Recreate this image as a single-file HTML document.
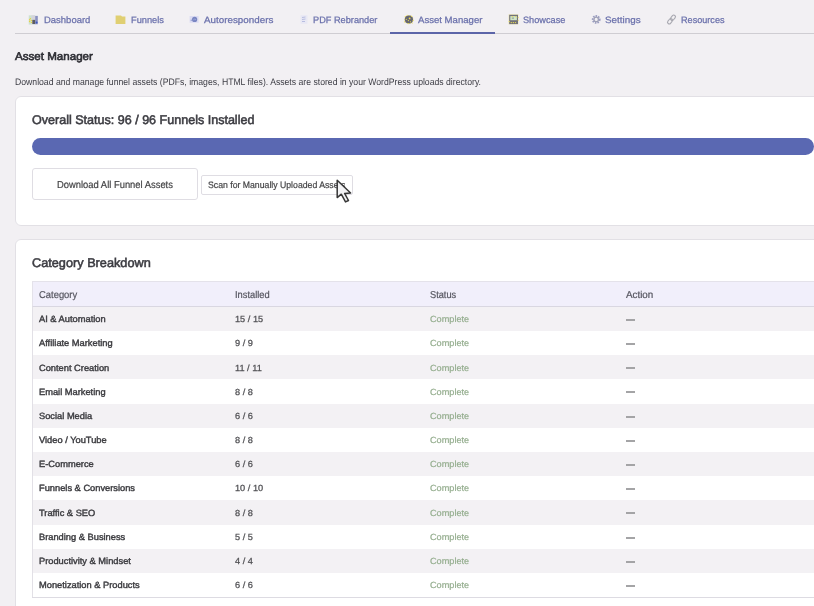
<!DOCTYPE html>
<html><head><meta charset="utf-8">
<style>
html,body{margin:0;padding:0;}
body{width:814px;height:606px;overflow:hidden;position:relative;background:#f2f0f3;font-family:"Liberation Sans",sans-serif;}
.a{position:absolute;white-space:nowrap;line-height:1;transform-origin:0 0;text-rendering:geometricPrecision;}
body>*{filter:blur(0.3px);}
</style></head><body>
<div class="a" style="left:15px;top:32.5px;width:800px;height:1px;background:#cfcdd2"></div>
<div class="a" style="left:389.8px;top:32px;width:104.8px;height:2px;background:#5c65a8"></div>
<svg class="a" style="left:0;top:0" width="814" height="30" viewBox="0 0 814 30">
<!-- dashboard -->
<rect x="28.8" y="15" width="9" height="9.5" fill="#e4e8ec"/>
<rect x="28.8" y="15.5" width="3" height="9" fill="#cde2cd"/>
<rect x="31.5" y="15.2" width="3.6" height="4.2" fill="#d4d4da"/>
<circle cx="30.4" cy="18.6" r="0.7" fill="#e8d040"/><circle cx="29.6" cy="19.7" r="0.7" fill="#e8d040"/><circle cx="31.4" cy="20.4" r="0.7" fill="#e8d040"/><circle cx="29.6" cy="21.5" r="0.7" fill="#e8d040"/><circle cx="31.4" cy="22.4" r="0.7" fill="#e8d040"/>
<rect x="32.3" y="19.8" width="3.2" height="4.3" fill="#5c5c60"/>
<rect x="35.2" y="16" width="2.6" height="8.2" fill="#8a90c0"/>
<circle cx="36.6" cy="22.6" r="1" fill="#3a55c0"/>
<!-- folder -->
<path d="M115.6 15.4 H121 L122 16.5 H125.4 V24 H115.6 Z" fill="#e0cf72"/>
<!-- autoresponders -->
<rect x="189.6" y="16" width="9" height="6.8" fill="#dcdcf2"/>
<circle cx="194.6" cy="19.4" r="2.6" fill="#7a86c2"/>
<path d="M193.3 19.8 Q194.6 18.6 196 19.6" stroke="#aab2dc" stroke-width="0.7" fill="none"/>
<circle cx="191.3" cy="20.3" r="0.8" fill="#9aa4d4"/>
<!-- pdf -->
<rect x="300.5" y="15.2" width="7" height="8.6" fill="#e8e8f4"/>
<path d="M302 17.5 L305.5 17 M302 19.5 L305.5 19 M302 21.5 L305 21.5" stroke="#b8bde0" stroke-width="1"/>
<!-- asset manager -->
<circle cx="408.9" cy="19.5" r="4.6" fill="#e6d870" opacity="0.55"/>
<circle cx="408.9" cy="19.5" r="4.1" fill="#666672"/>
<circle cx="406.3" cy="19.3" r="0.6" fill="#ecdc50"/><circle cx="409.6" cy="18.4" r="0.9" fill="#ecdc50"/><circle cx="408.4" cy="20.6" r="0.6" fill="#ecdc50"/><circle cx="410.5" cy="21.8" r="0.6" fill="#ecdc50"/><circle cx="408.3" cy="23.6" r="0.7" fill="#ecdc50"/><circle cx="411.5" cy="16.3" r="0.6" fill="#ecdc50"/><circle cx="405.3" cy="16.5" r="0.6" fill="#ecdc50"/><circle cx="413.2" cy="20.5" r="0.6" fill="#ecdc50"/><circle cx="404.6" cy="21.8" r="0.6" fill="#ecdc50"/><circle cx="412.3" cy="23" r="0.5" fill="#ecdc50"/><circle cx="407.2" cy="15.3" r="0.5" fill="#ecdc50"/>
<!-- showcase -->
<rect x="508.6" y="14.3" width="9.8" height="10.1" fill="#e8dc88" opacity="0.6"/>
<rect x="509.2" y="14.8" width="8.8" height="9.3" fill="#727278"/>
<rect x="510.3" y="16.1" width="6.6" height="4.1" fill="#cfe4c8"/>
<rect x="511.8" y="17.6" width="2.2" height="1" fill="#8a9a88"/>
<circle cx="511.3" cy="22.6" r="0.7" fill="#ecdc50"/><circle cx="513.4" cy="22.6" r="0.7" fill="#ecdc50"/><circle cx="515.5" cy="22.6" r="0.7" fill="#ecdc50"/><circle cx="512.4" cy="16.6" r="0.6" fill="#ecdc50"/><circle cx="515.6" cy="16.6" r="0.6" fill="#ecdc50"/><circle cx="518.2" cy="17.5" r="0.5" fill="#ecdc50"/><circle cx="518.2" cy="20.5" r="0.5" fill="#ecdc50"/><circle cx="509.2" cy="21.5" r="0.6" fill="#ecdc50"/>
<!-- settings -->
<circle cx="596.2" cy="19.4" r="3.4" fill="none" stroke="#9a9cc0" stroke-width="2" stroke-dasharray="1.5 1"/>
<circle cx="596.2" cy="19.4" r="2.2" fill="none" stroke="#a0a2b8" stroke-width="1.3"/>
<!-- resources -->
<g transform="rotate(-50 671.5 19.5)" fill="none" stroke="#a8a8b0" stroke-width="1.1">
<rect x="666.3" y="17.8" width="5.8" height="3.4" rx="1.7"/>
<rect x="670.9" y="17.8" width="5.8" height="3.4" rx="1.7"/>
</g>
</svg>
<div class="a" style="left:43.50px;top:16.00px;font-size:9.2px;-webkit-text-stroke:0.25px #6a70ab;color:#6a70ab;transform:scaleX(1.0309);">Dashboard</div>
<div class="a" style="left:130.50px;top:16.00px;font-size:9.2px;-webkit-text-stroke:0.25px #6a70ab;color:#6a70ab;transform:scaleX(1.0082);">Funnels</div>
<div class="a" style="left:204.00px;top:16.00px;font-size:9.2px;-webkit-text-stroke:0.25px #6a70ab;color:#6a70ab;transform:scaleX(1.0685);">Autoresponders</div>
<div class="a" style="left:313.30px;top:16.00px;font-size:9.2px;-webkit-text-stroke:0.25px #6a70ab;color:#6a70ab;transform:scaleX(1.0011);">PDF Rebrander</div>
<div class="a" style="left:418.30px;top:16.00px;font-size:9.2px;-webkit-text-stroke:0.25px #6a70ab;color:#6a70ab;transform:scaleX(1.0424);">Asset Manager</div>
<div class="a" style="left:522.70px;top:16.00px;font-size:9.2px;-webkit-text-stroke:0.25px #6a70ab;color:#6a70ab;transform:scaleX(0.9989);">Showcase</div>
<div class="a" style="left:605.30px;top:16.00px;font-size:9.2px;-webkit-text-stroke:0.25px #6a70ab;color:#6a70ab;transform:scaleX(1.0709);">Settings</div>
<div class="a" style="left:680.80px;top:16.00px;font-size:9.2px;-webkit-text-stroke:0.25px #6a70ab;color:#6a70ab;transform:scaleX(0.9915);">Resources</div>
<div class="a" style="left:15.00px;top:52.40px;font-size:11.2px;-webkit-text-stroke:0.6px #2e2e34;color:#2e2e34;transform:scaleX(1.0355);">Asset Manager</div>
<div class="a" style="left:15.00px;top:77.80px;font-size:9.5px;color:#3c3c44;transform:scaleX(0.9111);">Download and manage funnel assets (PDFs, images, HTML files). Assets are stored in your WordPress uploads directory.</div>
<div class="a" style="left:15px;top:96.1px;width:830px;height:129.8px;box-sizing:border-box;background:#fff;border:1px solid #e2e0e5;border-radius:6px"></div>
<div class="a" style="left:32.40px;top:114.10px;font-size:12.6px;-webkit-text-stroke:0.55px #3c3c42;color:#3c3c42;transform:scaleX(0.9959);">Overall Status: 96 / 96 Funnels Installed</div>
<div class="a" style="left:31.7px;top:138px;width:782.3px;height:16.75px;border-radius:8.4px;background:#5a68b2"></div>
<div class="a" style="left:32.1px;top:168.4px;width:166.4px;height:31.4px;box-sizing:border-box;border:1px solid #dfdde3;border-radius:3px;background:#fff"></div>
<div class="a" style="left:57.20px;top:181.10px;font-size:10.1px;-webkit-text-stroke:0.2px #444446;color:#444446;transform:scaleX(0.9307);">Download All Funnel Assets</div>
<div class="a" style="left:200.9px;top:174.6px;width:151.9px;height:20.2px;box-sizing:border-box;border:1px solid #dfdde3;border-radius:2px;background:#fff"></div>
<div class="a" style="left:208.40px;top:181.00px;font-size:9.3px;-webkit-text-stroke:0.2px #444446;color:#444446;transform:scaleX(0.9352);">Scan for Manually Uploaded Assets</div>
<div class="a" style="left:15px;top:239.1px;width:830px;height:400px;box-sizing:border-box;background:#fff;border:1px solid #e2e0e5;border-radius:6px"></div>
<div class="a" style="left:32.10px;top:257.20px;font-size:12.6px;-webkit-text-stroke:0.55px #3c3c42;color:#3c3c42;transform:scaleX(1.0097);">Category Breakdown</div>
<div class="a" style="left:32px;top:281.2px;width:790px;height:25.7px;box-sizing:border-box;background:#f1effb;border:1px solid #e4e2ea;border-bottom-color:#d9d7e1"></div>
<div class="a" style="left:39.40px;top:291.30px;font-size:10.0px;-webkit-text-stroke:0.2px #55555f;color:#55555f;transform:scaleX(0.9414);">Category</div>
<div class="a" style="left:235.00px;top:291.30px;font-size:10.0px;-webkit-text-stroke:0.2px #55555f;color:#55555f;transform:scaleX(0.9316);">Installed</div>
<div class="a" style="left:430.40px;top:291.30px;font-size:10.0px;-webkit-text-stroke:0.2px #55555f;color:#55555f;transform:scaleX(0.9242);">Status</div>
<div class="a" style="left:626.10px;top:291.30px;font-size:10.0px;-webkit-text-stroke:0.2px #55555f;color:#55555f;transform:scaleX(0.9823);">Action</div>
<div class="a" style="left:32px;top:306.9px;width:790px;height:24.18px;background:#f3f1f4"></div>
<div class="a" style="left:39.20px;top:315.20px;font-size:9.0px;-webkit-text-stroke:0.4px #3c3c40;color:#3c3c40;transform:scaleX(1.0319431733995728);">AI &amp; Automation</div>
<div class="a" style="left:235.20px;top:315.20px;font-size:8.9px;-webkit-text-stroke:0.25px #505054;color:#505054;transform:scaleX(1.036110530167907);">15 / 15</div>
<div class="a" style="left:430.40px;top:315.20px;font-size:8.9px;-webkit-text-stroke:0.2px #94ad8e;color:#94ad8e;transform:scaleX(1.0317578952532735);">Complete</div>
<div class="a" style="left:626px;top:319px;width:9px;height:2px;background:#a4a4a6"></div>
<div class="a" style="left:32px;top:331.08px;width:790px;height:24.18px;background:#fff"></div>
<div class="a" style="left:39.20px;top:339.38px;font-size:9.0px;-webkit-text-stroke:0.4px #3c3c40;color:#3c3c40;transform:scaleX(1.0319431733995728);">Affiliate Marketing</div>
<div class="a" style="left:235.20px;top:339.38px;font-size:8.9px;-webkit-text-stroke:0.25px #505054;color:#505054;transform:scaleX(1.036110530167907);">9 / 9</div>
<div class="a" style="left:430.40px;top:339.38px;font-size:8.9px;-webkit-text-stroke:0.2px #94ad8e;color:#94ad8e;transform:scaleX(1.0317578952532735);">Complete</div>
<div class="a" style="left:626px;top:343px;width:9px;height:2px;background:#a4a4a6"></div>
<div class="a" style="left:32px;top:355.26px;width:790px;height:24.18px;background:#f3f1f4"></div>
<div class="a" style="left:39.20px;top:363.56px;font-size:9.0px;-webkit-text-stroke:0.4px #3c3c40;color:#3c3c40;transform:scaleX(1.0319431733995728);">Content Creation</div>
<div class="a" style="left:235.20px;top:363.56px;font-size:8.9px;-webkit-text-stroke:0.25px #505054;color:#505054;transform:scaleX(1.036110530167907);">11 / 11</div>
<div class="a" style="left:430.40px;top:363.56px;font-size:8.9px;-webkit-text-stroke:0.2px #94ad8e;color:#94ad8e;transform:scaleX(1.0317578952532735);">Complete</div>
<div class="a" style="left:626px;top:367px;width:9px;height:2px;background:#a4a4a6"></div>
<div class="a" style="left:32px;top:379.44px;width:790px;height:24.18px;background:#fff"></div>
<div class="a" style="left:39.20px;top:387.74px;font-size:9.0px;-webkit-text-stroke:0.4px #3c3c40;color:#3c3c40;transform:scaleX(1.0319431733995728);">Email Marketing</div>
<div class="a" style="left:235.20px;top:387.74px;font-size:8.9px;-webkit-text-stroke:0.25px #505054;color:#505054;transform:scaleX(1.036110530167907);">8 / 8</div>
<div class="a" style="left:430.40px;top:387.74px;font-size:8.9px;-webkit-text-stroke:0.2px #94ad8e;color:#94ad8e;transform:scaleX(1.0317578952532735);">Complete</div>
<div class="a" style="left:626px;top:391px;width:9px;height:2px;background:#a4a4a6"></div>
<div class="a" style="left:32px;top:403.62px;width:790px;height:24.18px;background:#f3f1f4"></div>
<div class="a" style="left:39.20px;top:411.92px;font-size:9.0px;-webkit-text-stroke:0.4px #3c3c40;color:#3c3c40;transform:scaleX(1.0319431733995728);">Social Media</div>
<div class="a" style="left:235.20px;top:411.92px;font-size:8.9px;-webkit-text-stroke:0.25px #505054;color:#505054;transform:scaleX(1.036110530167907);">6 / 6</div>
<div class="a" style="left:430.40px;top:411.92px;font-size:8.9px;-webkit-text-stroke:0.2px #94ad8e;color:#94ad8e;transform:scaleX(1.0317578952532735);">Complete</div>
<div class="a" style="left:626px;top:416px;width:9px;height:2px;background:#a4a4a6"></div>
<div class="a" style="left:32px;top:427.8px;width:790px;height:24.18px;background:#fff"></div>
<div class="a" style="left:39.20px;top:436.10px;font-size:9.0px;-webkit-text-stroke:0.4px #3c3c40;color:#3c3c40;transform:scaleX(1.0319431733995728);">Video / YouTube</div>
<div class="a" style="left:235.20px;top:436.10px;font-size:8.9px;-webkit-text-stroke:0.25px #505054;color:#505054;transform:scaleX(1.036110530167907);">8 / 8</div>
<div class="a" style="left:430.40px;top:436.10px;font-size:8.9px;-webkit-text-stroke:0.2px #94ad8e;color:#94ad8e;transform:scaleX(1.0317578952532735);">Complete</div>
<div class="a" style="left:626px;top:440px;width:9px;height:2px;background:#a4a4a6"></div>
<div class="a" style="left:32px;top:451.98px;width:790px;height:24.18px;background:#f3f1f4"></div>
<div class="a" style="left:39.20px;top:460.28px;font-size:9.0px;-webkit-text-stroke:0.4px #3c3c40;color:#3c3c40;transform:scaleX(1.0319431733995728);">E-Commerce</div>
<div class="a" style="left:235.20px;top:460.28px;font-size:8.9px;-webkit-text-stroke:0.25px #505054;color:#505054;transform:scaleX(1.036110530167907);">6 / 6</div>
<div class="a" style="left:430.40px;top:460.28px;font-size:8.9px;-webkit-text-stroke:0.2px #94ad8e;color:#94ad8e;transform:scaleX(1.0317578952532735);">Complete</div>
<div class="a" style="left:626px;top:464px;width:9px;height:2px;background:#a4a4a6"></div>
<div class="a" style="left:32px;top:476.16px;width:790px;height:24.18px;background:#fff"></div>
<div class="a" style="left:39.20px;top:484.46px;font-size:9.0px;-webkit-text-stroke:0.4px #3c3c40;color:#3c3c40;transform:scaleX(1.0319431733995728);">Funnels &amp; Conversions</div>
<div class="a" style="left:235.20px;top:484.46px;font-size:8.9px;-webkit-text-stroke:0.25px #505054;color:#505054;transform:scaleX(1.036110530167907);">10 / 10</div>
<div class="a" style="left:430.40px;top:484.46px;font-size:8.9px;-webkit-text-stroke:0.2px #94ad8e;color:#94ad8e;transform:scaleX(1.0317578952532735);">Complete</div>
<div class="a" style="left:626px;top:488px;width:9px;height:2px;background:#a4a4a6"></div>
<div class="a" style="left:32px;top:500.34px;width:790px;height:24.18px;background:#f3f1f4"></div>
<div class="a" style="left:39.20px;top:508.64px;font-size:9.0px;-webkit-text-stroke:0.4px #3c3c40;color:#3c3c40;transform:scaleX(1.0319431733995728);">Traffic &amp; SEO</div>
<div class="a" style="left:235.20px;top:508.64px;font-size:8.9px;-webkit-text-stroke:0.25px #505054;color:#505054;transform:scaleX(1.036110530167907);">8 / 8</div>
<div class="a" style="left:430.40px;top:508.64px;font-size:8.9px;-webkit-text-stroke:0.2px #94ad8e;color:#94ad8e;transform:scaleX(1.0317578952532735);">Complete</div>
<div class="a" style="left:626px;top:512px;width:9px;height:2px;background:#a4a4a6"></div>
<div class="a" style="left:32px;top:524.52px;width:790px;height:24.18px;background:#fff"></div>
<div class="a" style="left:39.20px;top:532.82px;font-size:9.0px;-webkit-text-stroke:0.4px #3c3c40;color:#3c3c40;transform:scaleX(1.0319431733995728);">Branding &amp; Business</div>
<div class="a" style="left:235.20px;top:532.82px;font-size:8.9px;-webkit-text-stroke:0.25px #505054;color:#505054;transform:scaleX(1.036110530167907);">5 / 5</div>
<div class="a" style="left:430.40px;top:532.82px;font-size:8.9px;-webkit-text-stroke:0.2px #94ad8e;color:#94ad8e;transform:scaleX(1.0317578952532735);">Complete</div>
<div class="a" style="left:626px;top:537px;width:9px;height:2px;background:#a4a4a6"></div>
<div class="a" style="left:32px;top:548.7px;width:790px;height:24.18px;background:#f3f1f4"></div>
<div class="a" style="left:39.20px;top:557.00px;font-size:9.0px;-webkit-text-stroke:0.4px #3c3c40;color:#3c3c40;transform:scaleX(1.0319431733995728);">Productivity &amp; Mindset</div>
<div class="a" style="left:235.20px;top:557.00px;font-size:8.9px;-webkit-text-stroke:0.25px #505054;color:#505054;transform:scaleX(1.036110530167907);">4 / 4</div>
<div class="a" style="left:430.40px;top:557.00px;font-size:8.9px;-webkit-text-stroke:0.2px #94ad8e;color:#94ad8e;transform:scaleX(1.0317578952532735);">Complete</div>
<div class="a" style="left:626px;top:561px;width:9px;height:2px;background:#a4a4a6"></div>
<div class="a" style="left:32px;top:572.88px;width:790px;height:24.18px;background:#fff"></div>
<div class="a" style="left:39.20px;top:581.18px;font-size:9.0px;-webkit-text-stroke:0.4px #3c3c40;color:#3c3c40;transform:scaleX(1.0319431733995728);">Monetization &amp; Products</div>
<div class="a" style="left:235.20px;top:581.18px;font-size:8.9px;-webkit-text-stroke:0.25px #505054;color:#505054;transform:scaleX(1.036110530167907);">6 / 6</div>
<div class="a" style="left:430.40px;top:581.18px;font-size:8.9px;-webkit-text-stroke:0.2px #94ad8e;color:#94ad8e;transform:scaleX(1.0317578952532735);">Complete</div>
<div class="a" style="left:626px;top:585px;width:9px;height:2px;background:#a4a4a6"></div>
<div class="a" style="left:32px;top:306.9px;width:1px;height:290.2px;background:#e2e0e6"></div>
<div class="a" style="left:32px;top:596.6px;width:790px;height:1px;background:#dddbe2"></div>
<svg class="a" style="left:320px;top:170px" width="40" height="40" viewBox="320 170 40 40">
<path d="M337.2 180.2 L337.2 197.6 L341.3 194.2 L345.5 201.9 L348.5 200.5 L344.6 193.4 L350.6 193.0 Z" fill="#f3f3f5" stroke="#363636" stroke-width="1.5" stroke-linejoin="round"/>
</svg>
</body></html>
